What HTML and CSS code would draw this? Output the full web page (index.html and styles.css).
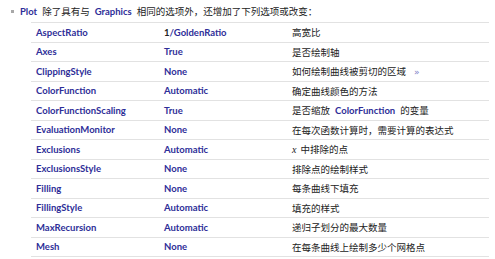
FILE: index.html
```html
<!DOCTYPE html>
<html lang="zh-CN">
<head>
<meta charset="utf-8">
<link rel="stylesheet" href="styles.css">
</head>
<body>
<div class="intro">
  <span class="bullet"></span>
  <span class="sym">Plot</span><span class="cn">除了具有与</span><span class="sym">Graphics</span><span class="cn">相同的选项外，还增加了下列选项或改变：</span>
</div>
<table class="opts">
  <colgroup><col class="c1"><col class="c2"><col class="c3"></colgroup>
  <tr><td class="sym">AspectRatio</td><td class="val"><span class="num">1</span>/GoldenRatio</td><td class="desc">高宽比</td></tr>
  <tr><td class="sym">Axes</td><td class="val">True</td><td class="desc">是否绘制轴</td></tr>
  <tr><td class="sym">ClippingStyle</td><td class="val">None</td><td class="desc">如何绘制曲线被剪切的区域<span class="more">»</span></td></tr>
  <tr><td class="sym">ColorFunction</td><td class="val">Automatic</td><td class="desc">确定曲线颜色的方法</td></tr>
  <tr><td class="sym">ColorFunctionScaling</td><td class="val">True</td><td class="desc">是否缩放<span class="sym inl">ColorFunction</span>的变量</td></tr>
  <tr><td class="sym">EvaluationMonitor</td><td class="val">None</td><td class="desc">在每次函数计算时，需要计算的表达式</td></tr>
  <tr><td class="sym">Exclusions</td><td class="val">Automatic</td><td class="desc"><i class="var">x</i>中排除的点</td></tr>
  <tr><td class="sym">ExclusionsStyle</td><td class="val">None</td><td class="desc">排除点的绘制样式</td></tr>
  <tr><td class="sym">Filling</td><td class="val">None</td><td class="desc">每条曲线下填充</td></tr>
  <tr><td class="sym">FillingStyle</td><td class="val">Automatic</td><td class="desc">填充的样式</td></tr>
  <tr><td class="sym">MaxRecursion</td><td class="val">Automatic</td><td class="desc">递归子划分的最大数量</td></tr>
  <tr><td class="sym">Mesh</td><td class="val">None</td><td class="desc">在每条曲线上绘制多少个网格点</td></tr>
</table>
</body>
</html>
```
FILE: styles.css
```css
html, body {
  margin: 0;
  padding: 0;
  background: #ffffff;
}
body {
  font-family: "Noto Sans CJK SC", sans-serif;
  font-size: 9.5px;
  color: #222222;
}
.intro {
  display: flex;
  align-items: center;
  height: 22px;
  padding-left: 11px;
  white-space: nowrap;
}
.bullet {
  width: 3px;
  height: 3px;
  background: #a8a8a8;
  margin-right: 6px;
}
.sym {
  font-family: "Lato", "Noto Sans CJK SC", sans-serif;
  font-weight: 700;
  font-size: 9.5px;
  color: #2e2e98;
}
.intro .cn {
  margin: 0 5px;
}
.opts {
  margin-left: 31px;
  width: 458px;
  border-collapse: collapse;
  table-layout: fixed;
  border-top: 1px solid #e2e2e2;
}
.c1 { width: 128px; }
.c2 { width: 128px; }
.opts tr {
  height: 19.5px;
  border-bottom: 1px solid #e2e2e2;
}
.opts td {
  padding: 0 0 0 5px;
  white-space: nowrap;
  vertical-align: middle;
}
.val {
  font-family: "Lato", sans-serif;
  font-weight: 700;
  font-size: 9.5px;
  color: #2e2e98;
}
.val .num {
  color: #222222;
}
.desc {
  color: #222222;
}
.inl {
  margin: 0 5px;
}
.var {
  font-family: "Liberation Serif", serif;
  font-size: 10px;
  margin-right: 4px;
}
.more {
  margin-left: 8px;
  font-family: "DejaVu Sans", sans-serif;
  font-size: 9px;
  color: #8080c8;
}
```
